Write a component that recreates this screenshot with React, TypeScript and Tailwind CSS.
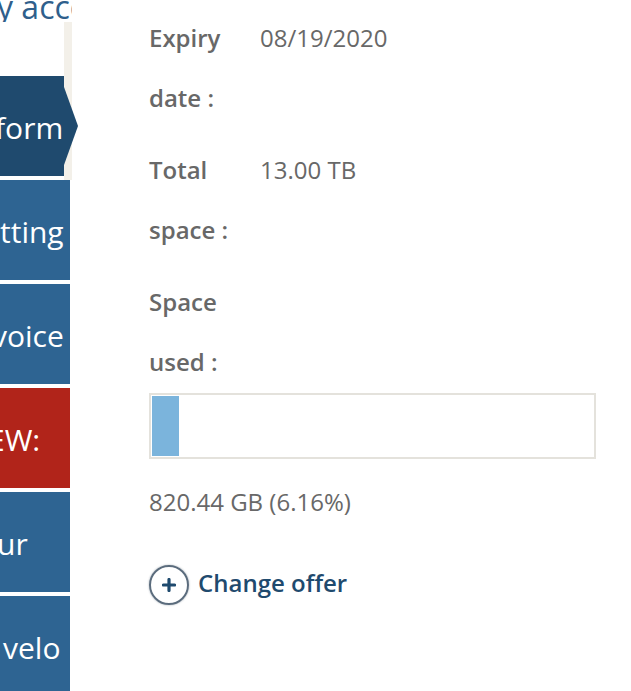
import * as React from 'react';

type NavItem = { label: string; offset: string; tone: string };

const navItems: NavItem[] = [
  { label: 'tting', offset: 'ml-[0px]', tone: 'bg-[#2e6492]' },
  { label: 'voice', offset: 'ml-[-8px]', tone: 'bg-[#2e6492]' },
  { label: 'EW:', offset: 'ml-[-12px]', tone: 'bg-[#b1241a]' },
  { label: 'ur', offset: 'ml-[-3px]', tone: 'bg-[#2e6492]' },
  { label: 'velo', offset: 'ml-[3px]', tone: 'bg-[#2e6492]' },
];

const details = [
  { label: 'Expiry date :', value: '08/19/2020' },
  { label: 'Total space :', value: '13.00 TB' },
  { label: 'Space used :', value: '' },
];

const usedPercent = 6.16;

const PlusCircle: React.FC = () => (
  <span className="mt-[3px] flex h-10 w-10 shrink-0 items-center justify-center rounded-full border-2 border-[#5b6c7d] shadow-[0_0_2px_rgba(40,60,80,0.45)]">
    <svg width="14" height="14" viewBox="0 0 14 14">
      <path d="M7 1.5v11M1.5 7h11" stroke="#1f4a6e" strokeWidth="3.2" strokeLinecap="round" />
    </svg>
  </span>
);

export default function App() {
  return (
    <div className="flex h-[691px] w-[631px] overflow-hidden bg-white font-['Open_Sans',sans-serif]">
      {/* Sidebar */}
      <aside className="relative z-10 flex w-[72px] shrink-0 flex-col">
        <div className="h-[22px] w-[72px] shrink-0 overflow-hidden">
          <p className="ml-[-3px] mt-[-8px] whitespace-nowrap text-[32px] leading-[30px] text-[#2f5f8c]">
            y acco
          </p>
        </div>
        <div className="flex h-[158px] shrink-0">
          <div className="w-[64px] pt-[54px]">
            <div className="relative flex h-[100px] items-center bg-[#1f4a6e] pt-[3px] text-[30px] text-white">
              <span className="block w-full overflow-hidden whitespace-nowrap">
                <span className="ml-[-5px] block">form</span>
              </span>
              <svg
                className="absolute left-full top-[11px]"
                width="14"
                height="78"
                viewBox="0 0 14 78"
              >
                <path d="M0 0L14 39L0 78Z" fill="#1f4a6e" />
              </svg>
            </div>
          </div>
          <div className="w-[8px] bg-[#f3f0e9]" />
        </div>
        <div className="flex shrink-0 flex-col gap-[4px]">
          {navItems.map((item) => (
            <div
              key={item.label}
              className={`flex h-[100px] w-[70px] shrink-0 items-center overflow-hidden pt-[3px] text-[30px] text-white ${item.tone}`}
            >
              <span className={`block whitespace-nowrap ${item.offset}`}>{item.label}</span>
            </div>
          ))}
        </div>
      </aside>

      {/* Main */}
      <main className="flex-1 pl-[77px] pr-[35px] pt-[8px] text-[24px] leading-[60px] text-[#686868]">
        <div className="flex flex-col gap-[12px]">
          {details.map((row) => (
            <div key={row.label} className="grid grid-cols-[111px_1fr]">
              <span className="pr-[10px] font-semibold">{row.label}</span>
              <span>{row.value}</span>
            </div>
          ))}
        </div>

        <div className="mt-px h-[66px] border-2 border-[#e4e2dc] p-px">
          <div className="h-full bg-[#7bb4dc]" style={{ width: `${usedPercent}%` }} />
        </div>

        <p className="mt-[13px]">820.44 GB (6.16%)</p>

        <button className="mt-[21px] flex h-[60px] items-center gap-[9px] font-semibold text-[#1f4a6e]">
          <PlusCircle />
          <span>Change offer</span>
        </button>
      </main>
    </div>
  );
}
